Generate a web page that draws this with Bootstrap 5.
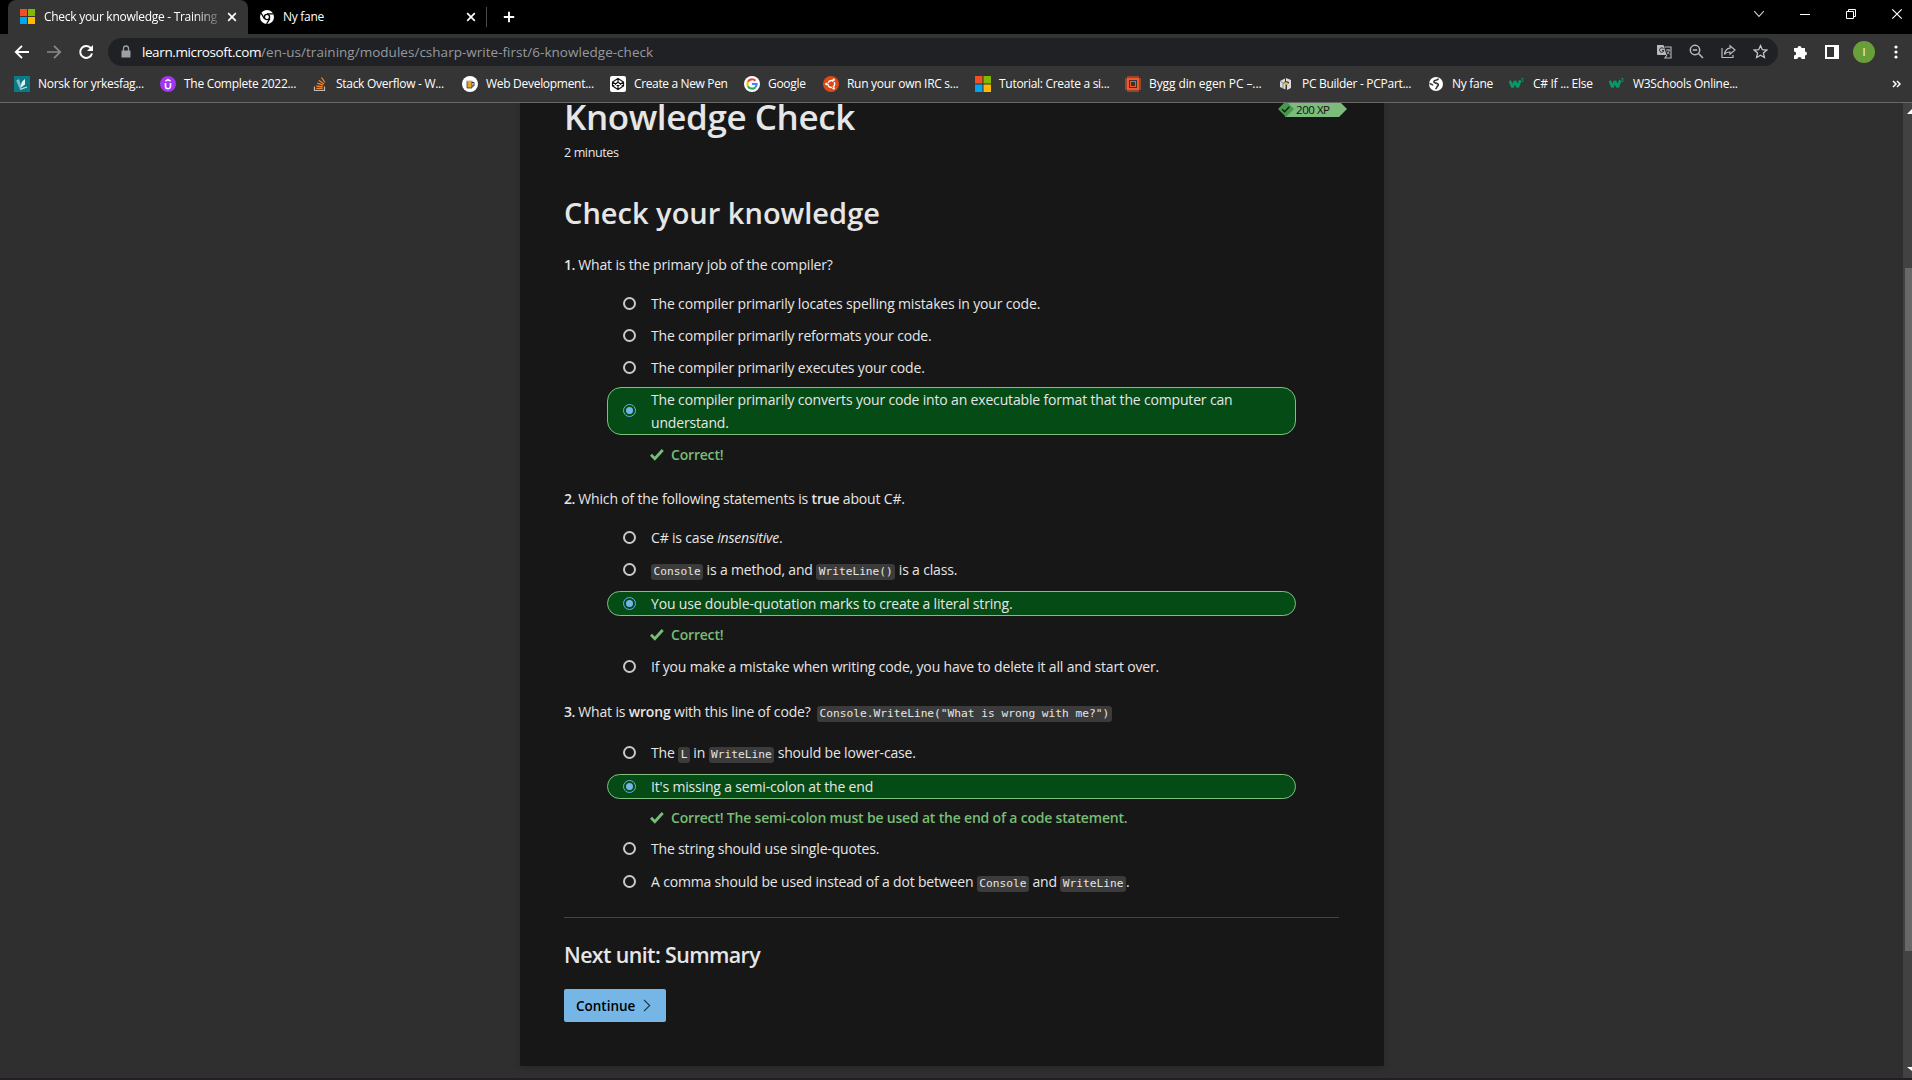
<!DOCTYPE html>
<html lang="en" data-bs-theme="dark">
<head>
<meta charset="utf-8">
<title>Check your knowledge - Training</title>
<link rel="stylesheet" href="https://cdn.jsdelivr.net/npm/bootstrap@5.3.0/dist/css/bootstrap.min.css">
<style>
html,body{height:100%}
body{background:#2f2f2f;color:#e6e6e6;font:14px/23px "Open Sans","Noto Sans",sans-serif;letter-spacing:-.17px;overflow:hidden}
svg{display:block;flex:none}
/* browser frame */
.tabstrip{height:34px;background:#000;padding-left:8px}
.browser-tab{height:34px;color:#fff;font-size:12px;letter-spacing:-.28px;line-height:16px;padding-bottom:1px}
.tab-active{width:240px;background:#353535;border-radius:8px 8px 0 0;padding-left:12px}
.tab-active .tab-title{width:174px;margin-left:9px;white-space:nowrap;overflow:hidden;-webkit-mask-image:linear-gradient(90deg,#000 150px,rgba(0,0,0,.25) 174px)}
.tab-active .tab-x{margin-left:9px}
.tab-idle{width:238px;padding-left:11px}
.tab-idle .tab-title{margin-left:8px}
.tab-idle .tab-x{margin-left:auto;margin-right:10px}
.tab-sep{width:1px;height:20px;background:#4a4a4a}
.window-btns{width:176px;padding-bottom:6px}
.toolbar{height:35px;background:#353535}
.nav-btns{width:108px;padding-left:6px}
.omnibox{width:1672px;height:28px;border-radius:14px;background:#202124;font-size:13.5px;line-height:20px;padding-left:12px;padding-right:2px}
.tool-btns{padding-left:6px}
.url-host{color:#fff;letter-spacing:-.38px;margin-left:10px}
.url-path{color:#969a9f;letter-spacing:.02px}
.slot{width:32px;display:flex;justify-content:center;align-items:center}
.avatar{width:22px;height:22px;border-radius:50%;background:#689f38;color:#fff;font-size:11px;line-height:22px;text-align:center}
.bookmarks{height:34px;background:#353535;border-bottom:1px solid #686868;padding-left:14px;color:#fff;font-size:12px;line-height:16px;letter-spacing:-.29px;padding-bottom:3px}
.bm{white-space:nowrap;gap:8px}
.w1{width:146px}.w2{width:153px}.w3{width:149px}.w4{width:148px}.w5{width:134px}.w6{width:79px}.w7{width:152px}.w8{width:150px}.w9{width:153px;letter-spacing:-.1px}.w10{width:150px}.w11{width:81px}.w12{width:100px}.w13{width:130px}
.w3 svg{margin-right:1px}.w5{letter-spacing:-.36px}
.more{margin-right:11px}
/* page */
.viewport{height:975px;overflow:hidden}
.unit{width:864px;height:963px;margin-left:520px;background:#171717;padding:0 45px 0 44px;box-shadow:0 2px 6px rgba(0,0,0,.18)}
.unit-title,.section-title,.next-title{color:#e6e6e6;font-weight:600}
.unit-title{font-size:35px;line-height:40px;letter-spacing:-.4px;margin:-6px 0 0}
.duration{font-size:12.6px;line-height:20px;letter-spacing:-.42px;margin-top:6px}
.section-title{font-size:29px;line-height:40px;letter-spacing:.01px;margin:30px 0 0}
.next-title{font-size:21.4px;line-height:30px;letter-spacing:-.62px;margin:22px 0 0}
.rule{height:1px;background:#444;margin-top:24px}
.xp{margin-right:-8px}
.xp text{font-size:11.5px;letter-spacing:-.45px}
.question{height:23px;white-space:nowrap}
.question b,.question strong{font-weight:600}
.question b{letter-spacing:-.5px}
.opt{height:23px;margin-left:59px;gap:15px}
.ring{width:13px;height:13px;border:2px solid #c9c9c9;border-radius:50%;flex:none;margin-top:-1px}
.opt-label{white-space:nowrap}
.picked{height:auto;margin-left:43px;width:689px;border:1px solid #7fbf7f;border-radius:14px;background:#054b16;padding:0 30px 0 15px}
.picked .opt-label{white-space:normal}
.picked .ring{border:1.5px solid #62b0e8;display:flex;align-items:center;justify-content:center}
.picked .ring::after{content:"";width:7px;height:7px;border-radius:50%;background:#75b6e7}
.right{height:23px;margin-left:86px;color:#77bd75;font-weight:600;gap:7px;letter-spacing:-.19px}
.g7{margin-top:7px}.g8{margin-top:8px}.g9{margin-top:9px}.g10{margin-top:10px}.g16{margin-top:16px}.g18{margin-top:18px}.g20{margin-top:20px}.g21{margin-top:21px}.g22{margin-top:22px}
code{display:inline-block;font:11.2px/16px "DejaVu Sans Mono",monospace;letter-spacing:0;color:#e6e6e6;background:#3b3b3b;border-radius:3px;padding:0 2.5px;vertical-align:.5px}
.question code{margin-left:3px}
.go{width:102px;height:33px;margin-top:19px;border:0;border-radius:2px;background:#75b6e7;color:#000;font-size:13.5px;line-height:33px;font-weight:600;letter-spacing:-.02px;padding:2px 0 0 12px;gap:8px}
.go svg{margin-top:-2px}
.scroller{width:9px;background:#424242;padding-left:2px;height:975px}
.thumb{height:683px;background:#686868;margin-top:154px}
.scroller svg{margin-left:2px}
.desk-edge{height:2px;background:#211f21}
</style>
<script src="https://cdn.jsdelivr.net/npm/bootstrap@5.3.0/dist/js/bootstrap.bundle.min.js"></script>
</head>
<body>
<svg width="0" height="0" class="position-absolute">
  <symbol id="ms" viewBox="0 0 15 15"><path fill="#f25022" d="M0 0h7v7H0z"/><path fill="#7fba00" d="M8 0h7v7H8z"/><path fill="#00a4ef" d="M0 8h7v7H0z"/><path fill="#ffb900" d="M8 8h7v7H8z"/></symbol>
  <symbol id="cross" viewBox="0 0 10 10"><path d="M1.2 1.2l7.6 7.6M8.8 1.2L1.2 8.8" stroke="#fff" stroke-width="1.7"/></symbol>
  <symbol id="tick" viewBox="0 0 14 12"><path d="M1 5.8l3.800 3.900L12.700 1" fill="none" stroke="#77bd75" stroke-width="2.900"/></symbol>
  <symbol id="w3" viewBox="0 0 17 16"><path d="M.8 4.500l2.900 7L6.300 5l2.900 6.500L12 4" fill="none" stroke="#059862" stroke-width="2.900" stroke-linejoin="bevel"/><path d="M13 2.300h2.200L14 3.800c1.800 0 1.600 2.200-.9 1.700" fill="none" stroke="#059862" stroke-width=".9"/></symbol>
</svg>
<header>
  <div class="tabstrip d-flex align-items-center">
    <div class="browser-tab tab-active d-flex align-items-center"><svg width="15" height="15"><use href="#ms"/></svg><span class="tab-title">Check your knowledge - Training</span><svg class="tab-x" width="10" height="10"><use href="#cross"/></svg></div>
    <div class="browser-tab tab-idle d-flex align-items-center">
      <svg width="16" height="16" viewBox="0 0 16 16"><circle cx="8" cy="8" r="7" fill="#fff"/><circle cx="8" cy="8" r="2.600" fill="#fff" stroke="#000" stroke-width="1.300"/><path d="M8 4.800h6.400M5.300 9.600L2.200 4.200M10.800 9.600L7.600 15" stroke="#000" stroke-width="1.300"/></svg>
      <span class="tab-title">Ny fane</span><svg class="tab-x" width="10" height="10"><use href="#cross"/></svg></div>
    <div class="tab-sep"></div>
    <svg class="ms-3" width="12" height="12" viewBox="0 0 12 12"><path d="M6 .8v10.400M.8 6h10.400" stroke="#fff" stroke-width="1.900"/></svg>
    <div class="window-btns d-flex align-items-center ms-auto">
      <svg width="46" height="14" viewBox="0 0 46 14"><path d="M18.200 4.200L23 9.400l4.800-5.200" fill="none" stroke="#ccc" stroke-width="1.100"/></svg>
      <svg width="46" height="14" viewBox="0 0 46 14"><path d="M18 7.500h10" stroke="#fff"/></svg>
      <svg width="46" height="14" viewBox="0 0 46 14"><path d="M18.500 4.500h7v7h-7zM20.500 4.500v-2h7v7h-2" fill="none" stroke="#fff"/></svg>
      <svg width="38" height="14" viewBox="0 0 38 14"><path d="M18.300 2.300l9.400 9.400M27.700 2.300l-9.400 9.400" stroke="#fff" stroke-width="1.200"/></svg>
    </div>
  </div>
  <div class="toolbar d-flex align-items-center">
    <div class="nav-btns d-flex">
      <div class="slot"><svg width="16" height="16" viewBox="0 0 16 16"><path d="M15 8H2.500M8 1.800L1.800 8 8 14.200" fill="none" stroke="#fff" stroke-width="1.900"/></svg></div>
      <div class="slot"><svg width="16" height="16" viewBox="0 0 16 16"><path d="M1 8h12.500M8 1.800L14.200 8 8 14.200" fill="none" stroke="#8a8a8a" stroke-width="1.700"/></svg></div>
      <div class="slot"><svg width="16" height="16" viewBox="0 0 16 16"><path d="M13 4.300A6 6 0 1 0 14 9.500" fill="none" stroke="#fff" stroke-width="2"/><path d="M15 1v6H9z" fill="#fff"/></svg></div>
    </div>
    <div class="omnibox d-flex align-items-center">
      <svg width="12" height="14" viewBox="0 0 12 14"><path d="M2 5.500h8q.5 0 .5.500v6q0 .5-.5.5H2q-.5 0-.5-.5V6q0-.5.5-.5z" fill="#9aa0a6"/><path d="M3.500 6V3.500a2.500 2.500 0 0 1 5 0V6" fill="none" stroke="#9aa0a6" stroke-width="1.300"/></svg>
      <span class="url-host">learn.microsoft.com</span><span class="url-path">/en-us/training/modules/csharp-write-first/6-knowledge-check</span>
      <div class="d-flex ms-auto">
        <div class="slot"><svg width="15" height="15" viewBox="0 0 15 15"><path d="M0 1h6.500l3 10H1q-1 0-1-1z" fill="#b9babc"/><path d="M7.500 3H14v11H8l2-3" fill="none" stroke="#b9babc" stroke-width="1.100"/><path d="M6.600 4.800A2.200 2.200 0 1 0 6.900 6.600H5" fill="none" stroke="#202124"/><path d="M8.800 6h4.400M11 5v1M12.300 6c-.3 2-1.500 3.500-2.600 4.300M9.800 7.500l3 3" fill="none" stroke="#b9babc" stroke-width=".9"/></svg></div>
        <div class="slot"><svg width="15" height="15" viewBox="0 0 15 15"><circle cx="6" cy="6" r="4.700" fill="none" stroke="#b9babc" stroke-width="1.500"/><path d="M3.800 6h4.400M9.500 9.500L14 14" stroke="#b9babc" stroke-width="1.500"/></svg></div>
        <div class="slot"><svg width="15" height="15" viewBox="0 0 15 15"><path d="M1 4v9.500h11V11M9 1.800L14 6 9 10.200V8C6 8 4.500 8.800 3.500 10.500 4 6.500 6 4.500 9 4.200z" fill="none" stroke="#b9babc" stroke-width="1.200"/></svg></div>
        <div class="slot"><svg width="15" height="15" viewBox="0 0 15 15"><path d="M7.500 1.600l1.800 4.100 4.500.4-3.400 3 1 4.400-3.900-2.300-3.900 2.300 1-4.400-3.400-3 4.500-.4z" fill="none" stroke="#c4c5c7" stroke-width="1.300"/></svg></div>
      </div>
    </div>
    <div class="tool-btns d-flex">
      <div class="slot"><svg width="15" height="15" viewBox="0 0 15 15"><path d="M1 4h3.500a2 2 0 1 1 4 0H12v3.500a2 2 0 1 1 0 4V15H8.600a2.100 2.100 0 0 0-4.200 0H1v-3.400a2.100 2.100 0 0 0 0-4.200z" fill="#fff"/></svg></div>
      <div class="slot"><svg width="14" height="14" viewBox="0 0 14 14"><path d="M0 0h14v14H0zM2 2v10h7V2z" fill="#fff" fill-rule="evenodd"/></svg></div>
      <div class="slot"><span class="avatar">I</span></div>
      <div class="slot"><svg width="4" height="14" viewBox="0 0 4 14"><g fill="#fff"><circle cx="2" cy="2" r="1.600"/><circle cx="2" cy="7" r="1.600"/><circle cx="2" cy="12" r="1.600"/></g></svg></div>
    </div>
  </div>
  <nav class="bookmarks d-flex align-items-center">
    <div class="bm w1 d-flex"><svg width="16" height="16" viewBox="0 0 16 16"><path fill="#0b7a85" d="M0 0h16v16H0z"/><path d="M2.200 4.500l3.600 8.500 1.700-1.500L5 3z" fill="#7cc0c6"/><path d="M7 11.500c-.5-4 1.500-7 4-8.500v5.500z" fill="#e3f5f5"/><path d="M6 13.300l7-2.300" fill="none" stroke="#bfe6e6" stroke-width="1.300"/></svg>Norsk for yrkesfag...</div>
    <div class="bm w2 d-flex"><svg width="16" height="16" viewBox="0 0 16 16"><circle cx="8" cy="8" r="8" fill="#a435f0"/><path d="M5.500 7v3.200a2.500 2.500 0 0 0 5 0V7M5.500 5.200L8 3.600l2.500 1.600" fill="none" stroke="#fff" stroke-width="1.600"/></svg>The Complete 2022...</div>
    <div class="bm w3 d-flex"><svg width="14" height="16" viewBox="0 0 14 16"><path d="M1.500 10.500v4h10v-4" fill="none" stroke="#bcbbbb" stroke-width="1.200"/><path d="M3.300 12.500h6.400M3.400 10l6.400.8M4.200 7.200l6 2M5.800 4.300l5 3.800M8.500 1.500l3.500 5" stroke="#f48024" stroke-width="1.300"/></svg>Stack Overflow - W...</div>
    <div class="bm w4 d-flex"><svg width="16" height="16" viewBox="0 0 16 16"><circle cx="8" cy="8" r="8" fill="#fff"/><path d="M5 5h5v7H5z" fill="#e6a723" stroke="#333" stroke-width=".8"/><path d="M10 6.500h2v3.500h-2" fill="none" stroke="#333"/><path d="M4.500 4h6v1.500h-6z" fill="#ddd"/></svg>Web Development...</div>
    <div class="bm w5 d-flex"><svg width="16" height="16" viewBox="0 0 16 16"><rect width="16" height="16" rx="2" fill="#fff"/><path d="M8 2.500L13.500 6v4L8 13.500 2.500 10V6zM2.500 6L8 9.800 13.500 6M2.500 10L8 6.200l5.500 3.800M8 2.500v3.700M8 9.800v3.700" fill="none" stroke="#111" stroke-width="1.200"/></svg>Create a New Pen</div>
    <div class="bm w6 d-flex"><svg width="16" height="16" viewBox="0 0 16 16"><circle cx="8" cy="8" r="8" fill="#fff"/><g fill="none" stroke-width="2.100"><path stroke="#ea4335" d="M3.900 5.800A4.700 4.700 0 0 1 11.400 4.700"/><path stroke="#fbbc05" d="M3.900 10.200a4.700 4.700 0 0 1 0-4.400"/><path stroke="#34a853" d="M11.200 11.400a4.700 4.700 0 0 1-7.300-1.200"/><path stroke="#4285f4" d="M8 8h4.700a4.700 4.700 0 0 1-1.500 3.400"/></g></svg>Google</div>
    <div class="bm w7 d-flex"><svg width="16" height="16" viewBox="0 0 16 16"><circle cx="8" cy="8" r="8" fill="#dd4814"/><circle cx="8.300" cy="8" r="3.400" fill="none" stroke="#fff" stroke-width="1.500" stroke-dasharray="6.100 1" stroke-dashoffset="2.500"/><g fill="#fff"><circle cx="3.300" cy="8" r="1.200"/><circle cx="10.700" cy="3.700" r="1.200"/><circle cx="10.700" cy="12.300" r="1.200"/></g></svg>Run your own IRC s...</div>
    <div class="bm w8 d-flex"><svg width="16" height="16"><use href="#ms"/></svg>Tutorial: Create a si...</div>
    <div class="bm w9 d-flex"><svg width="16" height="16" viewBox="0 0 16 16"><rect x="3" y="3" width="10" height="10" fill="none" stroke="#f1592a" stroke-width="2"/><rect x="5.500" y="5.500" width="5" height="5" fill="none" stroke="#f1592a" stroke-width="1"/><path d="M2.500 1h11M2.500 15h11" stroke="#f1592a" stroke-width="2" stroke-dasharray="1 1"/><path d="M1 2.500v11M15 2.500v11" stroke="#f1592a" stroke-width="2" stroke-dasharray="1 1"/></svg>Bygg din egen PC –...</div>
    <div class="bm w10 d-flex"><svg width="16" height="16" viewBox="0 0 16 16"><path d="M2 5l5-2.500v3L5 7l2.500 1.500v5L2 11zM8 2l5 2v8l-4 2V8.500l2-1V6L8 5z" fill="#d9dadb"/><path d="M5 7l3-1 3 1.500L8 9z" fill="#edb92c"/><path d="M2 5l3 2v5.500" fill="none" stroke="#777" stroke-width=".8"/></svg>PC Builder - PCPart...</div>
    <div class="bm w11 d-flex"><svg width="16" height="16" viewBox="0 0 16 16"><circle cx="8" cy="8" r="7" fill="#fff"/><path d="M10.500 2.500c-.5 1.500-2 1.500-3.500 1.900-1.500.6-1.500 1.900 0 2.400s3.300.7 3.300 1.700c0 1.500-1 1.500-1.300 2.500s-1 1.500-1.500 2M1.500 7.500c1.500.3 3 1 3.500 2" fill="none" stroke="#353535" stroke-width="1.600"/></svg>Ny fane</div>
    <div class="bm w12 d-flex"><svg width="16" height="16"><use href="#w3"/></svg>C# If ... Else</div>
    <div class="bm w13 d-flex"><svg width="16" height="16"><use href="#w3"/></svg>W3Schools Online...</div>
    <svg class="more ms-auto" width="9" height="8" viewBox="0 0 9 8"><path d="M1 1l3 3-3 3M5 1l3 3-3 3" fill="none" stroke="#fff" stroke-width="1.500"/></svg>
  </nav>
</header>
<div class="viewport d-flex">
  <main class="unit">
    <div class="d-flex justify-content-between align-items-start">
      <h1 class="unit-title">Knowledge Check</h1>
      <svg class="xp" width="69" height="14" viewBox="0 0 69 14"><path d="M7-2h54l8 8-8 8H7z" fill="#7cbb7c"/><path d="M0 6l8-8 8 8-8 8z" fill="#46994a"/><path d="M4 6.200l2.600 2.600 4.700-5" fill="none" stroke="#0c1f0c" stroke-width="1.300"/><text x="18" y="10.500" fill="#111">200 XP</text></svg>
    </div>
    <div class="duration">2 minutes</div>
    <h2 class="section-title">Check your knowledge</h2>

    <div class="question g20"><b>1.</b> What is the primary job of the compiler?</div>
    <div class="opt d-flex align-items-center g16"><i class="ring"></i><span class="opt-label">The compiler primarily locates spelling mistakes in your code.</span></div>
    <div class="opt d-flex align-items-center g9"><i class="ring"></i><span class="opt-label">The compiler primarily reformats your code.</span></div>
    <div class="opt d-flex align-items-center g9"><i class="ring"></i><span class="opt-label">The compiler primarily executes your code.</span></div>
    <div class="opt picked d-flex align-items-center g8"><i class="ring"></i><span class="opt-label">The compiler primarily converts your code into an executable format that the computer can understand.</span></div>
    <div class="right d-flex align-items-center g8"><svg width="14" height="12"><use href="#tick"/></svg>Correct!</div>

    <div class="question g21"><b>2.</b> Which of the following statements is <strong>true</strong> about C#.</div>
    <div class="opt d-flex align-items-center g16"><i class="ring"></i><span class="opt-label">C# is case <em>insensitive</em>.</span></div>
    <div class="opt d-flex align-items-center g9"><i class="ring"></i><span class="opt-label"><code>Console</code> is a method, and <code>WriteLine()</code> is a class.</span></div>
    <div class="opt picked d-flex align-items-center g10"><i class="ring"></i><span class="opt-label">You use double-quotation marks to create a literal string.</span></div>
    <div class="right d-flex align-items-center g7"><svg width="14" height="12"><use href="#tick"/></svg>Correct!</div>
    <div class="opt d-flex align-items-center g9"><i class="ring"></i><span class="opt-label">If you make a mistake when writing code, you have to delete it all and start over.</span></div>

    <div class="question g22"><b>3.</b> What is <strong>wrong</strong> with this line of code? <code>Console.WriteLine("What is wrong with me?")</code></div>
    <div class="opt d-flex align-items-center g18"><i class="ring"></i><span class="opt-label">The <code>L</code> in <code>WriteLine</code> should be lower-case.</span></div>
    <div class="opt picked d-flex align-items-center g10"><i class="ring"></i><span class="opt-label">It's missing a semi-colon at the end</span></div>
    <div class="right d-flex align-items-center g7"><svg width="14" height="12"><use href="#tick"/></svg>Correct! The semi-colon must be used at the end of a code statement.</div>
    <div class="opt d-flex align-items-center g8"><i class="ring"></i><span class="opt-label">The string should use single-quotes.</span></div>
    <div class="opt d-flex align-items-center g10"><i class="ring"></i><span class="opt-label">A comma should be used instead of a dot between <code>Console</code> and <code>WriteLine</code>.</span></div>

    <div class="rule"></div>
    <h3 class="next-title">Next unit: Summary</h3>
    <button class="btn go d-flex align-items-center">Continue<svg width="8" height="13" viewBox="0 0 8 13"><path d="M1 .8l5.700 5.700L1 12.200" fill="none" stroke="#16324a" stroke-width="1.100"/></svg></button>
  </main>
  <div class="scroller ms-auto">
    <svg width="5" height="11" viewBox="0 0 5 11"><path d="M5 6v5H0z" fill="#fff"/></svg>
    <div class="thumb"></div>
    <svg width="5" height="125" viewBox="0 0 5 125"><path d="M0 116h5v4z" fill="#fff"/></svg>
  </div>
</div>
<div class="desk-edge"></div>
</body>
</html>
